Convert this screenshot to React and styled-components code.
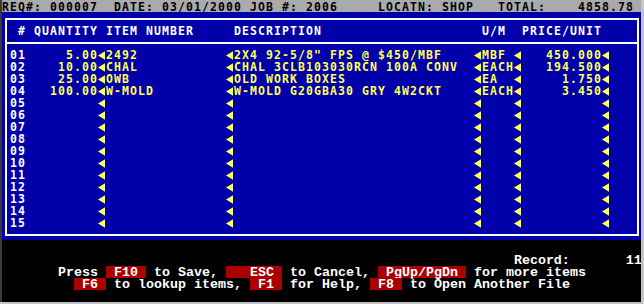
import React from 'react';
import styled, { createGlobalStyle } from 'styled-components';

const COL = 8;

const GlobalStyle = createGlobalStyle`
  html, body {
    margin: 0;
    padding: 0;
    background: #c4c4c4;
  }
  body {
    width: 644px;
    height: 304px;
    overflow: hidden;
  }
`;

const Frame = styled.div`
  width: 644px;
  height: 304px;
  display: flex;
  align-items: flex-start;
  background: #c4c4c4;
`;

const Screen = styled.div`
  width: 639px;
  height: 302px;
  border-left: 2px solid #3a3a3a;
  background: #000;
  overflow: hidden;
  display: flex;
  flex-direction: column;
  font-family: "DejaVu Sans Mono", monospace;
  font-weight: bold;
  font-size: 11.5px;
  letter-spacing: 1.077px;
`;

const StatusBar = styled.div`
  flex: none;
  height: 12px;
  line-height: 15px;
  background: #aaaaaa;
  color: #000;
  white-space: pre;
`;

const Panel = styled.div`
  flex: none;
  height: 228px;
  box-sizing: border-box;
  padding: 6px 0 0 3px;
  background: #0000aa;
`;

const Box = styled.div`
  width: 634px;
  height: 218px;
  box-sizing: border-box;
  border: 2px solid #fff;
  padding-top: 4px;
  display: flex;
  flex-direction: column;
`;

const Row = styled.div`
  display: flex;
  height: 12px;
  padding-left: 3px;
`;

const Divider = styled.div`
  height: 2px;
  background: #fff;
  margin: 6px 0 4px;
`;

const Cell = styled.span`
  flex: none;
  display: block;
  width: ${p => p.$w * COL}px;
  height: 12px;
  line-height: 15px;
  white-space: pre;
  text-align: ${p => (p.$right ? 'right' : 'left')};
  color: ${p => p.$color || '#ffff55'};
`;

const ArrowBox = styled.svg`
  flex: none;
  display: block;
  width: ${COL}px;
  height: 12px;
`;

const Arrow = () => (
  <ArrowBox viewBox="0 0 8 12">
    <polygon points="0,7.5 7,3.3 7,11.7" fill="#ffff55" />
  </ArrowBox>
);

const Footer = styled.div`
  flex: 1;
  background: #000;
  padding-top: 14px;
  font-family: "Liberation Mono", monospace;
  font-weight: bold;
  font-size: 13.333px;
  letter-spacing: 0;
  color: #fff;
`;

const FooterLine = styled.div`
  display: flex;
  height: 12px;
`;

const Seg = styled.span`
  flex: none;
  display: block;
  height: 12px;
  line-height: 14.5px;
  white-space: pre;
  background: ${p => (p.$key ? '#aa0000' : 'transparent')};
`;

const items = [
  { qty: '5.00', item: '2492', desc: '2X4 92-5/8" FPS @ $450/MBF', um: 'MBF', price: '450.000' },
  { qty: '10.00', item: 'CHAL', desc: 'CHAL 3CLB103030RCN 100A CONV', um: 'EACH', price: '194.500' },
  { qty: '25.00', item: 'OWB', desc: 'OLD WORK BOXES', um: 'EA', price: '1.750' },
  { qty: '100.00', item: 'W-MOLD', desc: 'W-MOLD G20GBA30 GRY 4W2CKT', um: 'EACH', price: '3.450' },
];

const rows = Array.from({ length: 15 }, (_, i) => ({
  num: String(i + 1).padStart(2, '0'),
  ...(items[i] || { qty: '', item: '', desc: '', um: '', price: '' }),
}));

const keyLines = [
  [
    ['       Press '],
    [' F10 ', true],
    [' to Save, '],
    ['   ESC ', true],
    [' to Cancel, '],
    [' PgUp/PgDn ', true],
    [' for more items'],
  ],
  [
    ['         '],
    [' F6 ', true],
    [' to lookup items, '],
    [' F1 ', true],
    [' for Help, '],
    [' F8 ', true],
    [' to Open Another File'],
  ],
];

export default function App() {
  return (
    <>
      <GlobalStyle />
      <Frame>
        <Screen>
          <StatusBar>
            {'REQ#: 000007  DATE: 03/01/2000 JOB #: 2006     LOCATN: SHOP   TOTAL:    4858.78'}
          </StatusBar>
          <Panel>
            <Box>
              <Row>
                <Cell $w={2} $right $color="#fff">#</Cell>
                <Cell $w={9} $right $color="#fff">QUANTITY</Cell>
                <Cell $w={1} />
                <Cell $w={15} $color="#fff">ITEM NUMBER</Cell>
                <Cell $w={1} />
                <Cell $w={30} $color="#fff">DESCRIPTION</Cell>
                <Cell $w={1} />
                <Cell $w={4} $color="#fff">U/M</Cell>
                <Cell $w={1} />
                <Cell $w={10} $color="#fff">PRICE/UNIT</Cell>
              </Row>
              <Divider />
              {rows.map(r => (
                <Row key={r.num}>
                  <Cell $w={2} $color="#fff">{r.num}</Cell>
                  <Cell $w={9} $right>{r.qty}</Cell>
                  <Arrow />
                  <Cell $w={15}>{r.item}</Cell>
                  <Arrow />
                  <Cell $w={30}>{r.desc}</Cell>
                  <Arrow />
                  <Cell $w={4}>{r.um}</Cell>
                  <Arrow />
                  <Cell $w={10} $right>{r.price}</Cell>
                  <Arrow />
                </Row>
              ))}
            </Box>
          </Panel>
          <Footer>
            <FooterLine>
              <Seg>{' '.repeat(64) + 'Record:       11'}</Seg>
            </FooterLine>
            {keyLines.map((line, i) => (
              <FooterLine key={i}>
                {line.map(([text, isKey], j) => (
                  <Seg key={j} $key={isKey}>{text}</Seg>
                ))}
              </FooterLine>
            ))}
          </Footer>
        </Screen>
      </Frame>
    </>
  );
}
